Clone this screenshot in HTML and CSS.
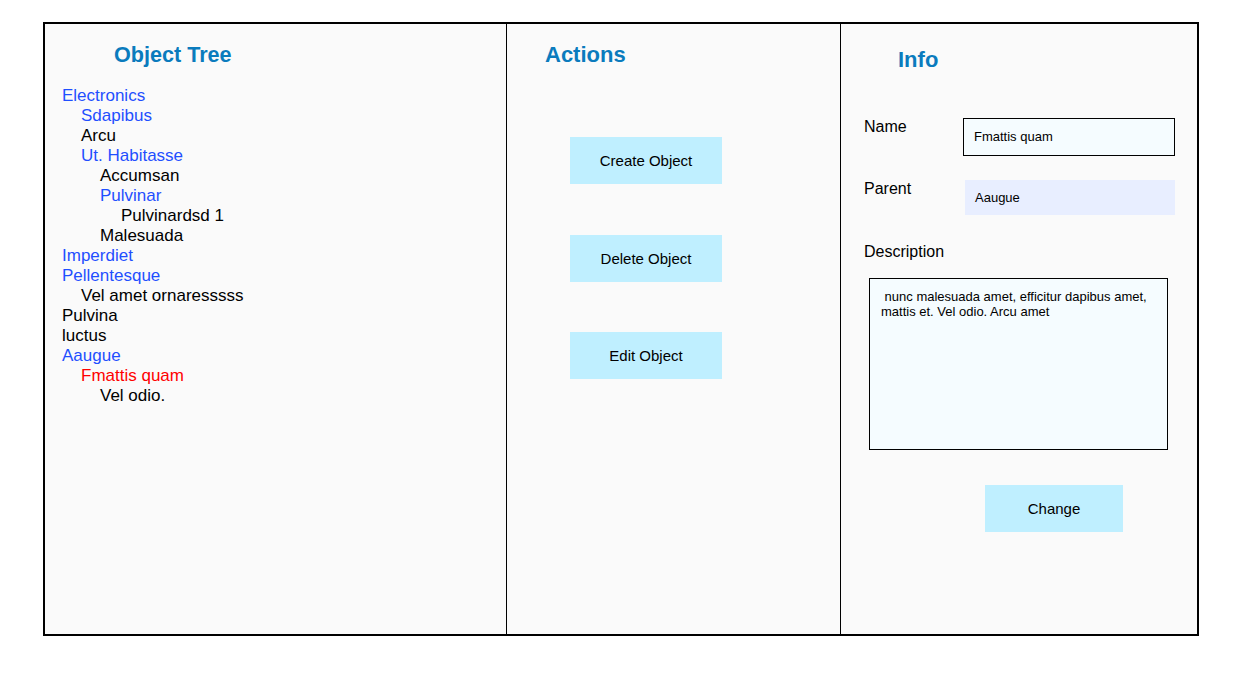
FILE: index.html
```html
<!DOCTYPE html>
<html>
<head>
<meta charset="utf-8">
<link rel="stylesheet" href="styles.css">
</head>
<body>
<div class="frame">
  <section class="col col-tree">
    <h2 class="title title-tree">Object Tree</h2>
    <ul class="tree">
      <li class="l1 link">Electronics</li>
      <li class="l2 link">Sdapibus</li>
      <li class="l2">Arcu</li>
      <li class="l2 link">Ut. Habitasse</li>
      <li class="l3">Accumsan</li>
      <li class="l3 link">Pulvinar</li>
      <li class="l4">Pulvinardsd 1</li>
      <li class="l3">Malesuada</li>
      <li class="l1 link">Imperdiet</li>
      <li class="l1 link">Pellentesque</li>
      <li class="l2">Vel amet ornaresssss</li>
      <li class="l1">Pulvina</li>
      <li class="l1">luctus</li>
      <li class="l1 link">Aaugue</li>
      <li class="l2 selected">Fmattis quam</li>
      <li class="l3">Vel odio.</li>
    </ul>
  </section>
  <section class="col col-actions">
    <h2 class="title title-actions">Actions</h2>
    <div class="actions">
      <button class="btn btn-action">Create Object</button>
      <button class="btn btn-action">Delete Object</button>
      <button class="btn btn-action">Edit Object</button>
    </div>
  </section>
  <section class="col col-info">
    <h2 class="title title-info">Info</h2>
    <div class="row row-name">
      <span class="label">Name</span>
      <div class="field field-name">Fmattis quam</div>
    </div>
    <div class="row row-parent">
      <span class="label">Parent</span>
      <div class="field field-parent">Aaugue</div>
    </div>
    <div class="label label-desc">Description</div>
    <div class="desc">&nbsp;nunc malesuada amet, efficitur dapibus amet, mattis et. Vel odio. Arcu amet</div>
    <button class="btn btn-change">Change</button>
  </section>
</div>
</body>
</html>
```
FILE: styles.css
```css
html, body {
  margin: 0;
  padding: 0;
  background: #ffffff;
  font-family: "Liberation Sans", Arial, sans-serif;
  color: #000;
}
body {
  padding: 22px 0 0 43px;
}
.frame {
  display: flex;
  width: 1152px;
  height: 610px;
  border: 2px solid #000;
  background: #fafafa;
}
.col {
  box-sizing: border-box;
  height: 100%;
}
.col-tree {
  width: 462px;
  border-right: 1px solid #000;
  padding: 18px 0 0 17px;
}
.col-actions {
  width: 334px;
  border-right: 1px solid #000;
  padding: 18px 0 0 38px;
}
.col-info {
  width: 356px;
  padding: 23px 0 0 23px;
  display: flex;
  flex-direction: column;
  align-items: flex-start;
}
.title {
  margin: 0;
  font-size: 22px;
  line-height: 25px;
  font-weight: bold;
  color: #0a7bbd;
}
.title-tree {
  padding-left: 52px;
  font-size: 21.6px;
}
.title-info {
  padding-left: 34px;
}
.tree {
  list-style: none;
  margin: 19px 0 0 0;
  padding: 0;
  font-size: 17px;
  line-height: 20px;
}
.tree li { white-space: nowrap; }
.l2 { padding-left: 19px; }
.l3 { padding-left: 38px; }
.l4 { padding-left: 59px; }
.link { color: #1f4fff; }
.selected { color: #ff0000; }
.btn {
  border: none;
  background: #bfefff;
  font-family: "Liberation Sans", Arial, sans-serif;
  font-size: 15px;
  color: #000;
  padding: 0;
  height: 47px;
  display: block;
}
.actions {
  display: flex;
  flex-direction: column;
  padding: 70px 0 0 25px;
  gap: 50.5px;
}
.btn-action {
  width: 152px;
}
.row {
  display: flex;
  align-items: flex-start;
}
.label {
  font-size: 16px;
  line-height: 18px;
}
.row-name {
  margin-top: 46px;
}
.row-name .label {
  width: 99px;
}
.row-parent {
  margin-top: 24px;
}
.row-parent .label {
  width: 101px;
}
.field {
  box-sizing: border-box;
  font-size: 13px;
}
.field-name {
  width: 212px;
  height: 38px;
  line-height: 36px;
  border: 1px solid #000;
  background: #f5fcff;
  padding-left: 10px;
}
.field-parent {
  width: 210px;
  height: 35px;
  line-height: 35px;
  background: #e8eeff;
  padding-left: 10px;
}
.label-desc {
  margin-top: 28px;
}
.desc {
  box-sizing: border-box;
  margin: 17px 0 0 5px;
  width: 299px;
  height: 172px;
  border: 1px solid #000;
  background: #f5fcff;
  font-size: 13px;
  line-height: 15px;
  padding: 10px 10px 0 11px;
}
.btn-change {
  margin: 35px 0 0 121px;
  width: 138px;
}
```
